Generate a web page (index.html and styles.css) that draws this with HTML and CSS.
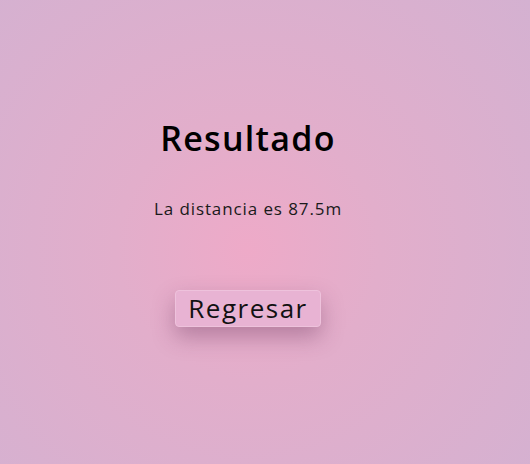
FILE: index.html
```html
<!DOCTYPE html>
<html lang="es">
<head>
<meta charset="utf-8">
<title>Resultado</title>
<link rel="stylesheet" href="styles.css">
</head>
<body>
<main class="page">
  <h1 class="title">Resultado</h1>
  <p class="result">La distancia es 87.5m</p>
  <button class="back">Regresar</button>
</main>
</body>
</html>
```
FILE: styles.css
```css
html, body {
  margin: 0;
  height: 100%;
}
body {
  background: radial-gradient(circle at 248px 250px, #eeaac8 0%, #e2aecb 35%, #d4b1d1 100%);
  font-family: "Open Sans", "DejaVu Sans", sans-serif;
  color: #111;
}
.page {
  width: 496px;
  display: flex;
  flex-direction: column;
  align-items: center;
  padding-top: 116px;
}
.title {
  margin: 0;
  font-size: 34px;
  font-weight: 600;
  line-height: 44px;
  color: #000;
  letter-spacing: 1.3px;
}
.result {
  margin: 38px 0 0;
  font-size: 17px;
  line-height: 22px;
  color: #1a1a1a;
  letter-spacing: 0.9px;
}
.back {
  margin-top: 70px;
  width: 146px;
  height: 37px;
  padding: 0;
  font-family: inherit;
  font-size: 26px;
  line-height: 35px;
  color: #111;
  letter-spacing: 1.5px;
  background: #e8b3d3;
  border: 1px solid #eec2dc;
  border-radius: 4px;
  box-shadow: 0 10px 22px rgba(90, 40, 80, 0.35);
}
```
